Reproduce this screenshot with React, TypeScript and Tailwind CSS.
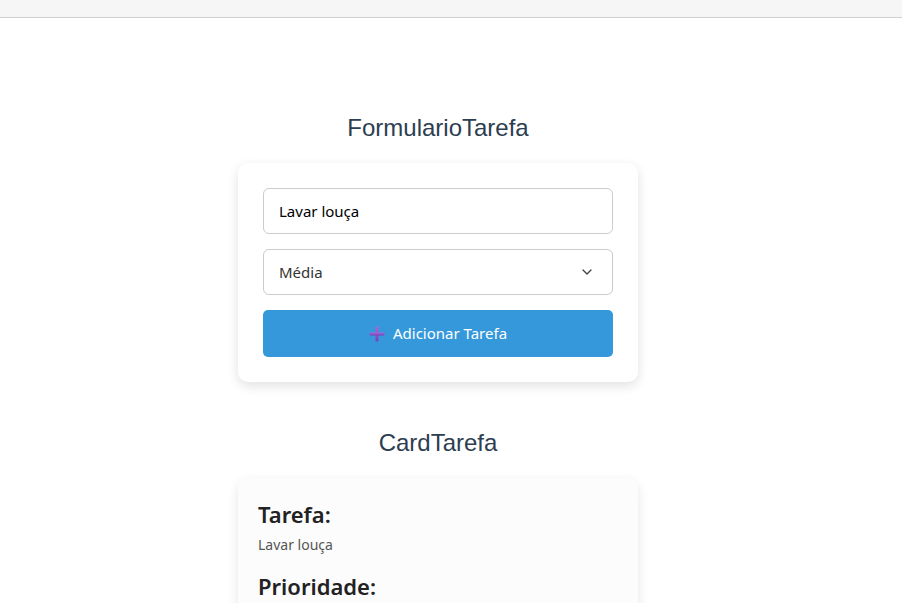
import { ChevronDown } from "lucide-react";

function PlusIcon() {
  return (
    <svg width="16" height="16" viewBox="0 0 16 16" className="shrink-0">
      <defs>
        <linearGradient id="plusg" x1="0" y1="0" x2="0" y2="1">
          <stop offset="0" stopColor="#a86ad8" />
          <stop offset="1" stopColor="#7a3fb8" />
        </linearGradient>
      </defs>
      <rect x="6.5" y="0.5" width="3" height="15" rx="1.2" fill="url(#plusg)" />
      <rect x="0.5" y="6.5" width="15" height="3" rx="1.2" fill="url(#plusg)" />
    </svg>
  );
}

function FormularioTarefa() {
  return (
    <div className="w-[400px] rounded-[10px] bg-white p-[25px] shadow-[0_4px_12px_rgba(0,0,0,0.12)]">
      <div className="flex flex-col gap-[15px]">
        <input
          defaultValue="Lavar louça"
          className="h-[46px] w-full rounded-[6px] border border-[#cccccc] px-[15px] text-[15px] text-black outline-none"
        />
        <div className="relative">
          <select
            defaultValue="Média"
            className="h-[46px] w-full appearance-none rounded-[6px] border border-[#cccccc] bg-white px-[15px] text-[15px] text-[#333] outline-none"
          >
            <option>Baixa</option>
            <option>Média</option>
            <option>Alta</option>
          </select>
          <ChevronDown
            size={16}
            strokeWidth={2}
            className="pointer-events-none absolute right-[18px] top-[15px] text-[#444]"
          />
        </div>
        <button className="flex h-[47px] w-full items-center justify-center gap-[8px] rounded-[5px] bg-[#3498db] text-[15px] text-white">
          <PlusIcon />
          Adicionar Tarefa
        </button>
      </div>
    </div>
  );
}

function CardTarefa() {
  return (
    <div className="w-[400px] rounded-[10px] bg-[#fcfcfc] px-[20px] pb-[20px] pt-[21px] shadow-[0_4px_12px_rgba(0,0,0,0.1)]">
      <h3 className="text-[22px] font-semibold leading-[30px] text-[#222]">Tarefa:</h3>
      <p className="mt-[6px] text-[14px] leading-[20px] text-[#555]">Lavar louça</p>
      <h3 className="mt-[16px] text-[22px] font-semibold leading-[30px] text-[#222]">Prioridade:</h3>
      <p className="mt-[6px] text-[14px] leading-[20px] text-[#555]">Média</p>
    </div>
  );
}

export default function App() {
  return (
    <div className="min-h-screen bg-white font-['Noto_Sans',sans-serif]">
      <div className="h-[18px] border-b border-[#d0d0d0] bg-[#f6f6f6]" />
      <main className="flex w-[876px] flex-col items-center pt-[96px]">
        <h2 className="font-['Liberation_Sans',Arial,sans-serif] text-[24px] leading-[28px] text-[#2c3e50]">
          FormularioTarefa
        </h2>
        <div className="mt-[21px]">
          <FormularioTarefa />
        </div>
        <h2 className="mt-[47px] font-['Liberation_Sans',Arial,sans-serif] text-[24px] leading-[28px] text-[#2c3e50]">
          CardTarefa
        </h2>
        <div className="mt-[21px]">
          <CardTarefa />
        </div>
      </main>
    </div>
  );
}
